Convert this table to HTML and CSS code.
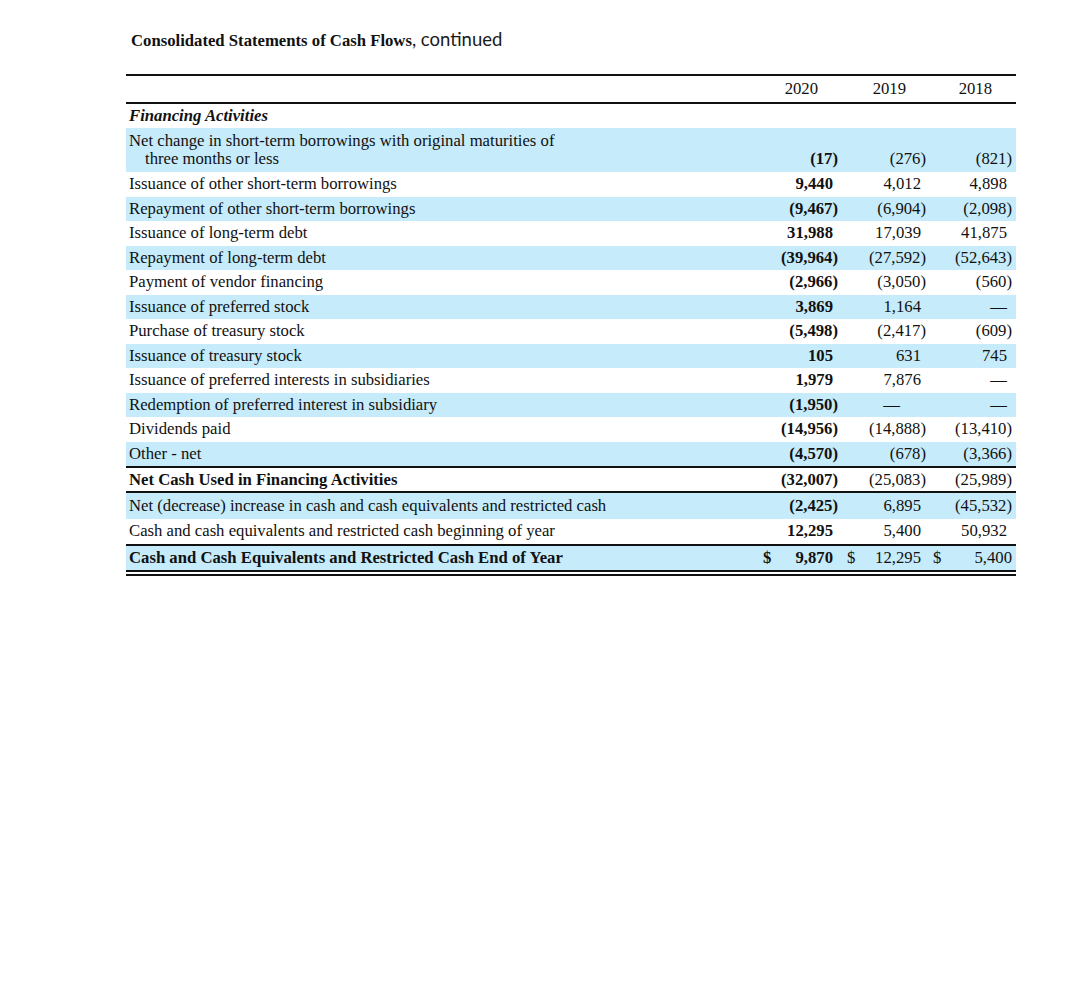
FILE: index.html
```html
<!DOCTYPE html>
<html>
<head>
<meta charset="utf-8">
<link rel="stylesheet" href="styles.css">
</head>
<body>
<div class="page">
  <h1 class="title"><span class="title-serif">Consolidated Statements of Cash Flows</span><span class="title-sans">, continued</span></h1>
  <div class="table">
    <div class="row head">
      <div class="label"></div>
      <div class="yr">2020</div>
      <div class="yr">2019</div>
      <div class="yr">2018</div>
    </div>
    <div class="row section">
      <div class="label"><b><i>Financing Activities</i></b></div>
      <div></div><div></div><div></div>
    </div>
    <div class="row two blue">
      <div class="label"><span class="l1">Net change in short-term borrowings with original maturities of</span><span class="l2">three months or less</span></div>
      <div class="n b">(17)</div>
      <div class="n">(276)</div>
      <div class="n">(821)</div>
    </div>
    <div class="row">
      <div class="label">Issuance of other short-term borrowings</div>
      <div class="n b p">9,440</div>
      <div class="n p">4,012</div>
      <div class="n p">4,898</div>
    </div>
    <div class="row blue">
      <div class="label">Repayment of other short-term borrowings</div>
      <div class="n b">(9,467)</div>
      <div class="n">(6,904)</div>
      <div class="n">(2,098)</div>
    </div>
    <div class="row">
      <div class="label">Issuance of long-term debt</div>
      <div class="n b p">31,988</div>
      <div class="n p">17,039</div>
      <div class="n p">41,875</div>
    </div>
    <div class="row blue">
      <div class="label">Repayment of long-term debt</div>
      <div class="n b">(39,964)</div>
      <div class="n">(27,592)</div>
      <div class="n">(52,643)</div>
    </div>
    <div class="row">
      <div class="label">Payment of vendor financing</div>
      <div class="n b">(2,966)</div>
      <div class="n">(3,050)</div>
      <div class="n">(560)</div>
    </div>
    <div class="row blue">
      <div class="label">Issuance of preferred stock</div>
      <div class="n b p">3,869</div>
      <div class="n p">1,164</div>
      <div class="n p">—</div>
    </div>
    <div class="row">
      <div class="label">Purchase of treasury stock</div>
      <div class="n b">(5,498)</div>
      <div class="n">(2,417)</div>
      <div class="n">(609)</div>
    </div>
    <div class="row blue">
      <div class="label">Issuance of treasury stock</div>
      <div class="n b p">105</div>
      <div class="n p">631</div>
      <div class="n p">745</div>
    </div>
    <div class="row">
      <div class="label">Issuance of preferred interests in subsidiaries</div>
      <div class="n b p">1,979</div>
      <div class="n p">7,876</div>
      <div class="n p">—</div>
    </div>
    <div class="row blue">
      <div class="label">Redemption of preferred interest in subsidiary</div>
      <div class="n b">(1,950)</div>
      <div class="n dash">—</div>
      <div class="n p">—</div>
    </div>
    <div class="row">
      <div class="label">Dividends paid</div>
      <div class="n b">(14,956)</div>
      <div class="n">(14,888)</div>
      <div class="n">(13,410)</div>
    </div>
    <div class="row blue">
      <div class="label">Other - net</div>
      <div class="n b">(4,570)</div>
      <div class="n">(678)</div>
      <div class="n">(3,366)</div>
    </div>
    <div class="row total">
      <div class="label b">Net Cash Used in Financing Activities</div>
      <div class="n b">(32,007)</div>
      <div class="n">(25,083)</div>
      <div class="n">(25,989)</div>
    </div>
    <div class="row blue tall">
      <div class="label">Net (decrease) increase in cash and cash equivalents and restricted cash</div>
      <div class="n b">(2,425)</div>
      <div class="n p">6,895</div>
      <div class="n">(45,532)</div>
    </div>
    <div class="row">
      <div class="label">Cash and cash equivalents and restricted cash beginning of year</div>
      <div class="n b p">12,295</div>
      <div class="n p">5,400</div>
      <div class="n p">50,932</div>
    </div>
    <div class="row blue final">
      <div class="label b">Cash and Cash Equivalents and Restricted Cash End of Year</div>
      <div class="n money m1 b p"><span>$</span><span>9,870</span></div>
      <div class="n money m2 p"><span>$</span><span>12,295</span></div>
      <div class="n money m3"><span>$</span><span>5,400</span></div>
    </div>
  </div>
</div>
</body>
</html>
```

FILE: styles.css
```css
html, body {
  margin: 0;
  padding: 0;
  background: #ffffff;
}

.page {
  padding-top: 29px;
  font-family: "Liberation Serif", "Times New Roman", serif;
  font-size: 16.7px;
  color: #111111;
}

.title {
  margin: 0 0 0 131px;
  font-size: 16.7px;
  line-height: 20px;
  font-weight: normal;
  white-space: nowrap;
}

.title-serif {
  font-family: "Liberation Serif", "Times New Roman", serif;
  font-weight: bold;
}

.title-sans {
  font-family: Lato, "Open Sans", sans-serif;
  font-size: 18.5px;
  color: #1a1a1a;
}

.table {
  width: 890px;
  margin-left: 126px;
  margin-top: 23px;
  border-top: 2px solid #111111;
  border-bottom: 6px double #111111;
}

.row {
  display: grid;
  grid-template-columns: 626px 90px 88px 86px;
  height: 24.5px;
  align-items: center;
  line-height: 20px;
  white-space: nowrap;
}

.blue {
  background: #c6ebfa;
}

.label {
  padding-left: 3px;
}

.b {
  font-weight: bold;
}

.head {
  height: 26px;
  border-bottom: 2px solid #111111;
}

.yr {
  text-align: right;
  padding-right: 24px;
}

.section {
  height: 24px;
}

.two {
  height: 44px;
  align-items: end;
  padding-bottom: 4px;
  box-sizing: border-box;
  line-height: 18px;
}

.two .label {
  display: flex;
  flex-direction: column;
}

.two .l2 {
  padding-left: 16px;
}

.n {
  text-align: right;
  padding-right: 4px;
}

.n.p {
  padding-right: 9px;
}

.n.dash {
  padding-right: 30px;
}

.total {
  height: 25px;
  border-top: 2px solid #111111;
  border-bottom: 2px solid #111111;
  box-sizing: border-box;
  height: 27px;
}

.tall {
  height: 26px;
}

.final {
  border-top: 2px solid #111111;
  height: 26px;
  box-sizing: border-box;
}

.money {
  display: flex;
  justify-content: space-between;
}

.m1 {
  padding-left: 11px;
}

.m2 {
  padding-left: 5px;
}

.m3 {
  padding-left: 3px;
}
```
